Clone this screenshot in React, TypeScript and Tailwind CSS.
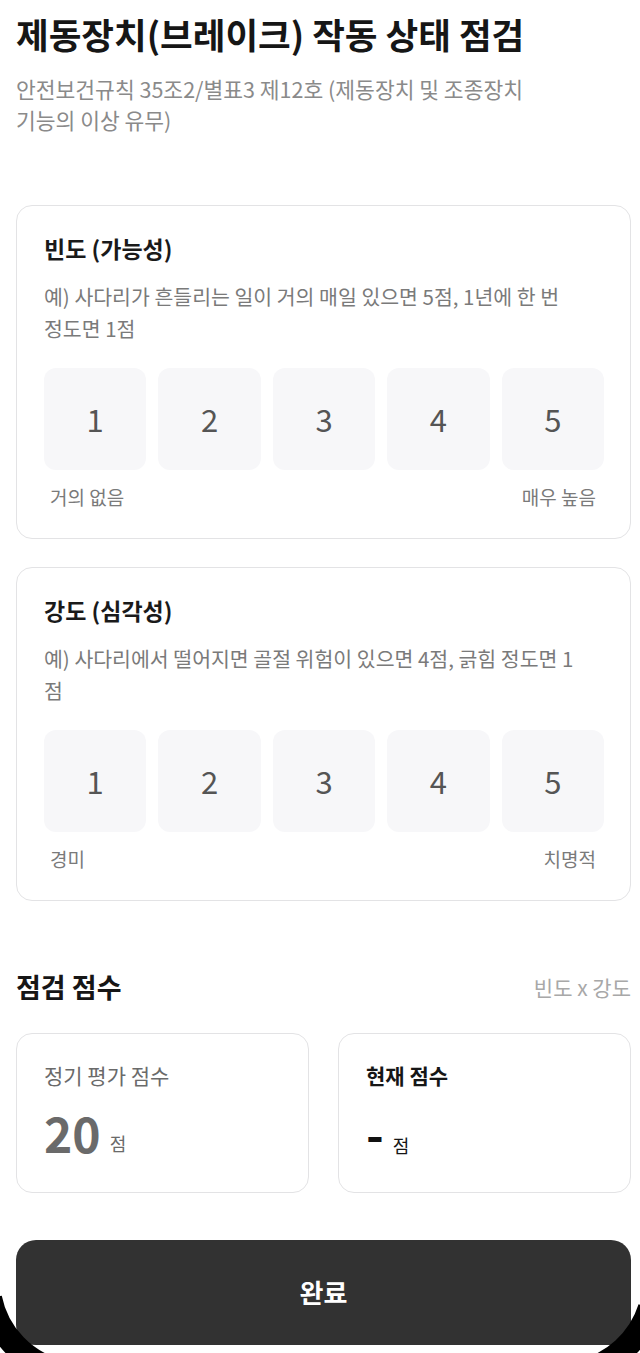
import React from "react";

const F = "font-['Noto_Sans_CJK_KR','Noto_Sans',sans-serif]";

function ScaleCard({
  title,
  desc,
  left,
  right,
}: {
  title: string;
  desc: React.ReactNode;
  left: string;
  right: string;
}) {
  return (
    <div className="rounded-[16px] border border-[#e3e3e5] bg-white pl-[27px] pr-[26px] pt-[26px] pb-[26px]">
      <div className="text-[23px] font-bold leading-[32px] text-[#1a1a1a]">{title}</div>
      <div className="mt-[16px] text-[20.5px] leading-[32px] text-[#7a7a7a]">{desc}</div>
      <div className="mt-[24px] grid grid-cols-5 gap-[12px]">
        {[1, 2, 3, 4, 5].map((n) => (
          <div
            key={n}
            className="flex h-[102px] items-center justify-center rounded-[12px] bg-[#f7f7f9] text-[31px] text-[#555]"
          >
            {n}
          </div>
        ))}
      </div>
      <div className="mt-[12px] flex justify-between pl-[6px] pr-[8px] text-[19px] leading-[30px] text-[#7a7a7a]">
        <span>{left}</span>
        <span>{right}</span>
      </div>
    </div>
  );
}

export default function App() {
  return (
    <div className={`relative min-h-[1353px] w-[640px] overflow-hidden bg-white pl-4 pr-[9px] ${F}`}>
      <h1 className="pt-[10px] text-[35.5px] font-bold leading-[48px] text-[#161616]">
        제동장치(브레이크) 작동 상태 점검
      </h1>
      <p className="mt-[15px] text-[21.5px] leading-[31px] text-[#8a8a8a]">
        안전보건규칙 35조2/별표3 제12호 (제동장치 및 조종장치
        <br />
        기능의 이상 유무)
      </p>

      <div className="mt-[70px] flex flex-col gap-[28px]">
        <ScaleCard
          title="빈도 (가능성)"
          desc={
            <>
              예) 사다리가 흔들리는 일이 거의 매일 있으면 5점, 1년에 한 번
              <br />
              정도면 1점
            </>
          }
          left="거의 없음"
          right="매우 높음"
        />
        <ScaleCard
          title="강도 (심각성)"
          desc={
            <>
              예) 사다리에서 떨어지면 골절 위험이 있으면 4점, 긁힘 정도면 1
              <br />점
            </>
          }
          left="경미"
          right="치명적"
        />
      </div>

      <div className="mt-[68px] flex items-center justify-between">
        <div className="text-[27px] font-bold leading-[36px] text-[#161616]">점검 점수</div>
        <div className="text-[21px] leading-[36px] text-[#a8a8a8]">빈도 x 강도</div>
      </div>

      <div className="mt-[28px] grid grid-cols-2 gap-[29px]">
        <div className="h-[160px] rounded-[16px] border border-[#e3e3e5] bg-white pl-[27px] pt-[26px]">
          <div className="text-[21px] leading-[30px] text-[#6a6a6a]">정기 평가 점수</div>
          <div className="mt-[16px] flex items-end gap-[9px]">
            <span className="text-[48px] font-bold leading-[52px] text-[#6a6a6a]">20</span>
            <span className="pb-[3px] text-[18px] leading-[24px] text-[#6a6a6a]">점</span>
          </div>
        </div>
        <div className="h-[160px] rounded-[16px] border border-[#e3e3e5] bg-white pl-[27px] pt-[26px]">
          <div className="text-[21px] font-bold leading-[30px] text-[#161616]">현재 점수</div>
          <div className="mt-[16px] flex items-end gap-[9px]">
            <span className="text-[48px] font-bold leading-[52px] text-[#111]">-</span>
            <span className="pb-[1px] text-[18px] leading-[24px] text-[#161616]">점</span>
          </div>
        </div>
      </div>

      <button className="mt-[47px] flex h-[105px] w-full items-start justify-center rounded-[20px] bg-[#323232] pt-[33px] text-[26px] font-bold leading-[38px] text-white">
        완료
      </button>

      <svg
        className="pointer-events-none absolute left-0 top-[1230px]"
        width="640"
        height="123"
        viewBox="0 1230 640 123"
      >
        <path d="M -10 1298 A 95 95 0 0 0 62 1372" fill="none" stroke="#000" strokeWidth="24" />
        <path d="M 650 1308 A 95 95 0 0 1 580 1372" fill="none" stroke="#000" strokeWidth="24" />
      </svg>
    </div>
  );
}
